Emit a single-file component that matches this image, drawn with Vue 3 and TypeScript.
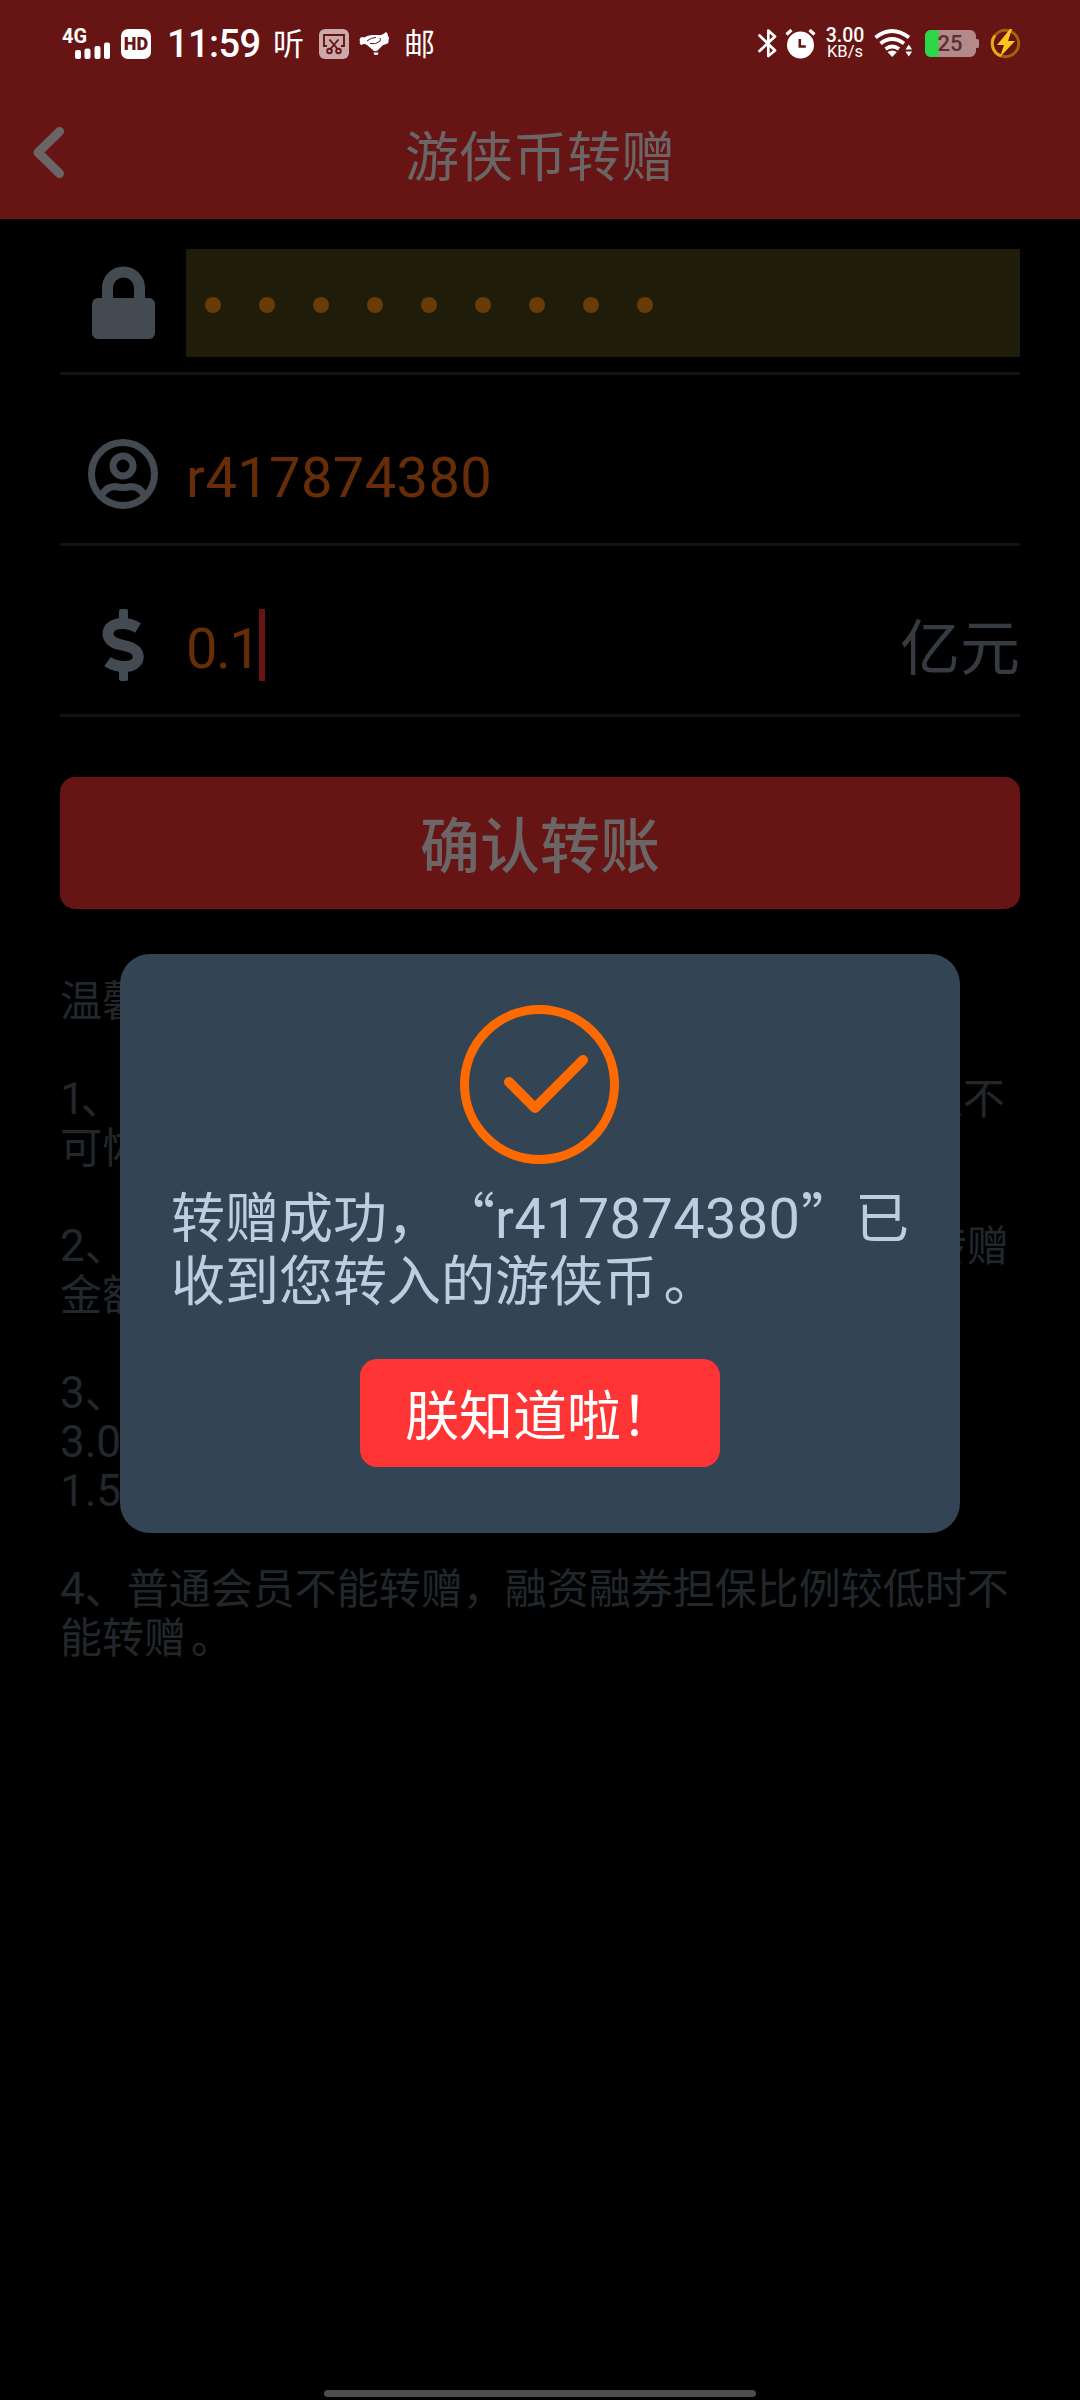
<script setup lang="ts">
import { ref } from 'vue'

const passwordLength = 9
const account = ref('r417874380')
const amount = ref('0.1')

interface TipLine {
  lead?: string
  text?: string
  stop?: boolean
}

const tips: TipLine[] = [
  { text: '温馨提示：' },
  {},
  { lead: '1', text: '、游侠币转赠后实时到账，请仔细核对用户名以不' },
  { text: '可恢复', stop: true },
  {},
  { lead: '2', text: '、转赠时将收取一定的手续费，手续费从您的转赠' },
  { text: '金额中扣除', stop: true },
  {},
  { lead: '3', text: '、会员手续费：' },
  { lead: '3.0%' },
  { lead: '1.5%' },
  {},
  { lead: '4', text: '、普通会员不能转赠，融资融券担保比例较低时不' },
  { text: '能转赠', stop: true },
]
</script>

<template>
  <div class="screen">
    <header class="top">
      <div class="status">
        <svg class="signal" width="50" height="34" viewBox="0 0 50 34">
          <text x="0" y="16" class="net" textLength="25" lengthAdjust="spacingAndGlyphs">4G</text>
          <g fill="#fff">
            <rect x="13" y="23" width="6" height="9" rx="2" />
            <rect x="22.5" y="21.500" width="6" height="10.500" rx="2" />
            <rect x="32.500" y="19" width="6" height="13" rx="2" />
            <rect x="42" y="15.500" width="6" height="16.500" rx="2" />
          </g>
        </svg>
        <span class="hd">HD</span>
        <span class="clock">11:59</span>
        <span class="app-glyph listen">听</span>
        <svg class="snip" width="30" height="30" viewBox="0 0 30 30">
          <rect width="30" height="30" rx="6" fill="#cba9a9" />
          <g fill="none" stroke="#661414" stroke-width="1.900">
            <path d="M8 17H5V6h20v11h-3M10.500 10.500l8.500 10M19.500 10.500l-8.500 10" />
            <circle cx="10.500" cy="22" r="2.300" />
            <circle cx="19.500" cy="22" r="2.300" />
          </g>
        </svg>
        <svg class="shake" width="31" height="23" viewBox="0 0 31 23">
          <path d="M1 6.500Q2 4 5 5.500Q9 3 13 3H22Q25 2 27 0Q29 1 29 4Q31 6 29.500 8Q30 12 27 12Q25 13 24 13L18.500 18.500Q17 19.500 15 19L8 13Q5 11 2.500 13Q0 12 1 9.500Q0 8 1 6.500z" fill="#fff" />
          <path d="M8 9Q12 5.500 17 5.500M11 11.500Q17 13 21 9Q22.500 7 20.500 6" fill="none" stroke="#661414" stroke-width="1" />
          <path d="M14.500 20.500h5l-1 2.500h-3z" fill="#fff" />
        </svg>
        <span class="app-glyph mail">邮</span>

        <span class="spring"></span>

        <svg class="bt" width="19" height="31" viewBox="0 0 19 31">
          <path d="M1.500 7.500L17 22.500 10.300 28V2.500L17 8.500 1.500 23" fill="none" stroke="#fff" stroke-width="2.700" stroke-linejoin="round" stroke-linecap="round" />
        </svg>
        <svg class="alarm" width="31" height="31" viewBox="0 0 31 31">
          <circle cx="15.500" cy="17" r="13.500" fill="#fff" />
          <path d="M1.500 6.500l5-4.500M29.500 6.500l-5-4.500" stroke="#fff" stroke-width="3.200" />
          <path d="M14.800 11v7.500h6" fill="none" stroke="#661414" stroke-width="2.600" />
        </svg>
        <span class="speed"><b>3.00</b><i>KB/s</i></span>
        <svg class="wifi" width="40" height="29" viewBox="0 0 40 29">
          <g fill="none" stroke="#fff" stroke-width="3.700">
            <path d="M1.500 8.500q16.500-13 33.500 0" />
            <path d="M6.500 14.500q11.500-9 23.500 0" />
            <path d="M11.500 20q6.800-5 13.500 0" />
          </g>
          <path d="M13.500 23q4.700-3 9.400 0l-4.700 5z" fill="#fff" />
          <path d="M31.500 20.500l3.300-5 3.300 5zM31.500 22.500l3.300 5 3.300-5z" fill="#fff" />
        </svg>
        <svg class="battery" width="54" height="27" viewBox="0 0 54 27">
          <path d="M6 0h39a6 6 0 0 1 6 6v3h1.500a1.500 1.500 0 0 1 1.500 1.500v6a1.500 1.500 0 0 1-1.500 1.500H51v3a6 6 0 0 1-6 6H6a6 6 0 0 1-6-6V6a6 6 0 0 1 6-6z" fill="#b38989" />
          <path d="M6 0h7.500v27H6a6 6 0 0 1-6-6V6a6 6 0 0 1 6-6z" fill="#2bd746" />
          <text x="12.500" y="21" class="level" textLength="25" lengthAdjust="spacingAndGlyphs">25</text>
        </svg>
        <svg class="bolt" width="31" height="31" viewBox="0 0 31 31">
          <circle cx="15.500" cy="15.500" r="13.200" fill="none" stroke="#a4620d" stroke-width="2.900" />
          <path d="M11 28A13.200 13.200 0 0 1 5 7.500" fill="none" stroke="#e7a914" stroke-width="2.900" />
          <path d="M20 1L7 17h7l-4 12 15-16h-7l4-12z" fill="#fec51b" />
        </svg>
      </div>
      <div class="nav">
        <svg class="back" width="33" height="53" viewBox="0 0 33 53">
          <path d="M27.500 5.500L6 26.500l21.500 21" fill="none" stroke="#6b6565" stroke-width="9" stroke-linecap="round" stroke-linejoin="round" />
        </svg>
        <h1>游侠币转赠</h1>
      </div>
    </header>

    <main>
      <div class="row">
        <svg class="icon" width="70" height="72" viewBox="0 0 70 72">
          <rect x="4" y="31" width="63" height="41" rx="6" fill="#434a52" />
          <path d="M19.500 33V21a16 16 0 0 1 32 0v12" fill="none" stroke="#434a52" stroke-width="11" />
        </svg>
        <div class="password">
          <span v-for="n in passwordLength" :key="n" class="dot"></span>
        </div>
      </div>
      <div class="row">
        <svg class="icon" width="70" height="70" viewBox="0 0 70 70">
          <g fill="none" stroke="#434a52" stroke-width="7">
            <circle cx="35" cy="35" r="31.500" />
            <circle cx="35" cy="27" r="10" />
            <path d="M14 56C17 50 21 47.500 27 47.500Q31 48.500 35 48.500T43 47.500C49 47.500 53 50 56 56" />
          </g>
        </svg>
        <span class="value">{{ account }}</span>
      </div>
      <div class="row">
        <svg class="icon" width="70" height="72" viewBox="0 0 70 72">
          <path d="M50 19C44.500 15.500 41 14.500 34.500 14.500C16 14.500 16 32 30 35L40 37.500C55 41.500 53 57.500 37 57.500C29 57.500 25 56.500 19.500 52.500" fill="none" stroke="#434a52" stroke-width="11" />
          <path d="M33 0h5a2 2 0 0 1 2 2v10h-9V2a2 2 0 0 1 2-2zM31 60h9v10a2 2 0 0 1-2 2h-5a2 2 0 0 1-2-2z" fill="#434a52" />
        </svg>
        <span class="value amount">{{ amount }}</span>
        <span class="caret"></span>
        <span class="unit">亿元</span>
      </div>

      <button class="submit" type="button">确认转账</button>

      <div class="tips">
        <p v-for="(tip, i) in tips" :key="i">
          <span v-if="tip.lead" class="latin" :class="{ narrow: tip.lead === '1' }">{{ tip.lead }}</span>{{ tip.text }}<span v-if="tip.stop" class="stop">。</span>
        </p>
      </div>
    </main>

    <div class="dialog">
      <svg class="done" width="160" height="160" viewBox="0 0 160 160">
        <g fill="none" stroke="#ff6a00">
          <circle cx="79.500" cy="79.500" r="75" stroke-width="9" />
          <path d="M49 77l26 26 48-48" stroke-width="10" stroke-linecap="round" stroke-linejoin="round" />
        </g>
      </svg>
      <p class="message">转赠成功，“<span class="latin">{{ account }}</span>”已<br />收到您转入的游侠币<span class="stop">。</span></p>
      <button class="ok" type="button">朕知道啦！</button>
    </div>

    <div class="home-bar"></div>
  </div>
</template>

<style>
html,
body {
  background: #000;
}
</style>

<style scoped>
.screen {
  position: relative;
  display: flex;
  flex-direction: column;
  width: 1080px;
  height: 2400px;
  overflow: hidden;
  background: #000;
  font-family: "Noto Sans CJK SC", sans-serif;
  text-spacing-trim: space-all;
}
h1,
p {
  margin: 0;
}
button {
  border: 0;
  padding: 0;
  font-family: inherit;
}
svg {
  display: block;
  flex: none;
  overflow: visible;
}
.top {
  height: 219px;
  background: #661414;
}
.status {
  display: flex;
  align-items: center;
  height: 87px;
  padding: 0 59px 0 62px;
  color: #fff;
}
.spring {
  flex: 1;
}
.net {
  font: 700 20px Roboto, sans-serif;
  fill: #fff;
}
.hd {
  width: 30px;
  height: 30px;
  margin-left: 9px;
  border-radius: 7px;
  background: #fff;
  color: #661414;
  font: 900 18px/30px Roboto, sans-serif;
  text-align: center;
}
.clock {
  width: 94px;
  margin-left: 16px;
  font: 500 38px/44px Roboto, sans-serif;
  letter-spacing: -0.6px;
  white-space: nowrap;
}
.app-glyph {
  width: 31px;
  padding-bottom: 4px;
  font-size: 31px;
  line-height: 30px;
  font-weight: 400;
}
.listen {
  margin-left: 12px;
}
.snip {
  margin-left: 15px;
}
.shake {
  margin-left: 10px;
}
.mail {
  margin-left: 14px;
}
.alarm {
  margin-left: 8px;
}
.speed {
  display: flex;
  flex-direction: column;
  align-items: center;
  width: 40px;
  margin-left: 9px;
  font-family: Roboto, sans-serif;
}
.speed b {
  font-size: 19.5px;
  line-height: 17px;
  font-weight: 500;
}
.speed i {
  font-size: 16.5px;
  line-height: 16px;
  font-style: normal;
  font-weight: 400;
}
.wifi {
  margin-left: 9px;
}
.battery {
  margin-left: 11px;
}
.level {
  font: 500 22px Roboto, sans-serif;
  fill: #5a3030;
}
.bolt {
  margin-left: 11px;
}
.nav {
  display: grid;
  grid-template-columns: 140px 1fr 140px;
  align-items: center;
  height: 130px;
}
.back {
  margin-left: 32px;
}
.nav h1 {
  padding-top: 3px;
  color: #6b6565;
  font-size: 54px;
  line-height: 80px;
  font-weight: 400;
  text-align: center;
}
main {
  padding: 0 60px;
}
.row {
  display: flex;
  align-items: center;
  box-sizing: border-box;
  height: 141px;
  margin-top: 30px;
  padding-left: 28px;
  border-bottom: 3px solid #0e1418;
}
.row:first-child {
  margin-top: 15px;
}
.icon {
  margin-right: 28px;
}
.password {
  display: flex;
  flex: 1;
  align-items: center;
  gap: 38px;
  height: 108px;
  padding: 4px 0 0 19px;
  box-sizing: border-box;
  background: #1f1c0a;
}
.dot {
  width: 16px;
  height: 16px;
  border-radius: 50%;
  background: #693b07;
}
.value {
  padding-top: 8px;
  color: #662d08;
  font: 400 56px/66px Roboto, sans-serif;
  letter-spacing: 0.4px;
}
.amount {
  width: 73px;
  letter-spacing: -1.5px;
}
.caret {
  width: 6px;
  height: 72px;
  background: #661414;
}
.unit {
  margin-left: auto;
  padding-bottom: 3px;
  color: #363b42;
  font-size: 60px;
  line-height: 80px;
}
.submit {
  display: block;
  width: 100%;
  height: 132px;
  margin-top: 60px;
  padding-bottom: 3px;
  border-radius: 15px;
  background: #661414;
  color: #6b6565;
  font-size: 60px;
  line-height: 80px;
  font-weight: 500;
}
.tips {
  margin-top: 64px;
  color: #22272c;
  font-size: 42px;
  font-weight: 400;
  white-space: nowrap;
}
.tips p {
  height: 49px;
  line-height: 49px;
}
.latin {
  font-family: Roboto, sans-serif;
  line-height: 0;
}
.tips .latin {
  font-size: 44px;
}
.narrow {
  margin-right: -4px;
}
.stop {
  padding-left: 0.12em;
}
.dialog {
  position: absolute;
  left: 120px;
  top: 954px;
  display: flex;
  flex-direction: column;
  align-items: center;
  box-sizing: border-box;
  width: 840px;
  height: 579px;
  padding-top: 51px;
  border-radius: 30px;
  background: #334454;
}
.message {
  width: 738px;
  margin-top: 18px;
  color: #bdcee0;
  font-size: 54px;
  line-height: 63px;
  white-space: nowrap;
}
.message .latin {
  display: inline-block;
  width: 306px;
  font-size: 56px;
  letter-spacing: 0.3px;
}
.ok {
  width: 360px;
  height: 108px;
  margin-top: 50px;
  border-radius: 17px;
  background: #ff3434;
  color: #fff;
  font-size: 54px;
  line-height: 80px;
}
.home-bar {
  width: 432px;
  height: 7px;
  margin: auto auto 3px;
  border-radius: 4px;
  background: #4d4d4d;
}
</style>
